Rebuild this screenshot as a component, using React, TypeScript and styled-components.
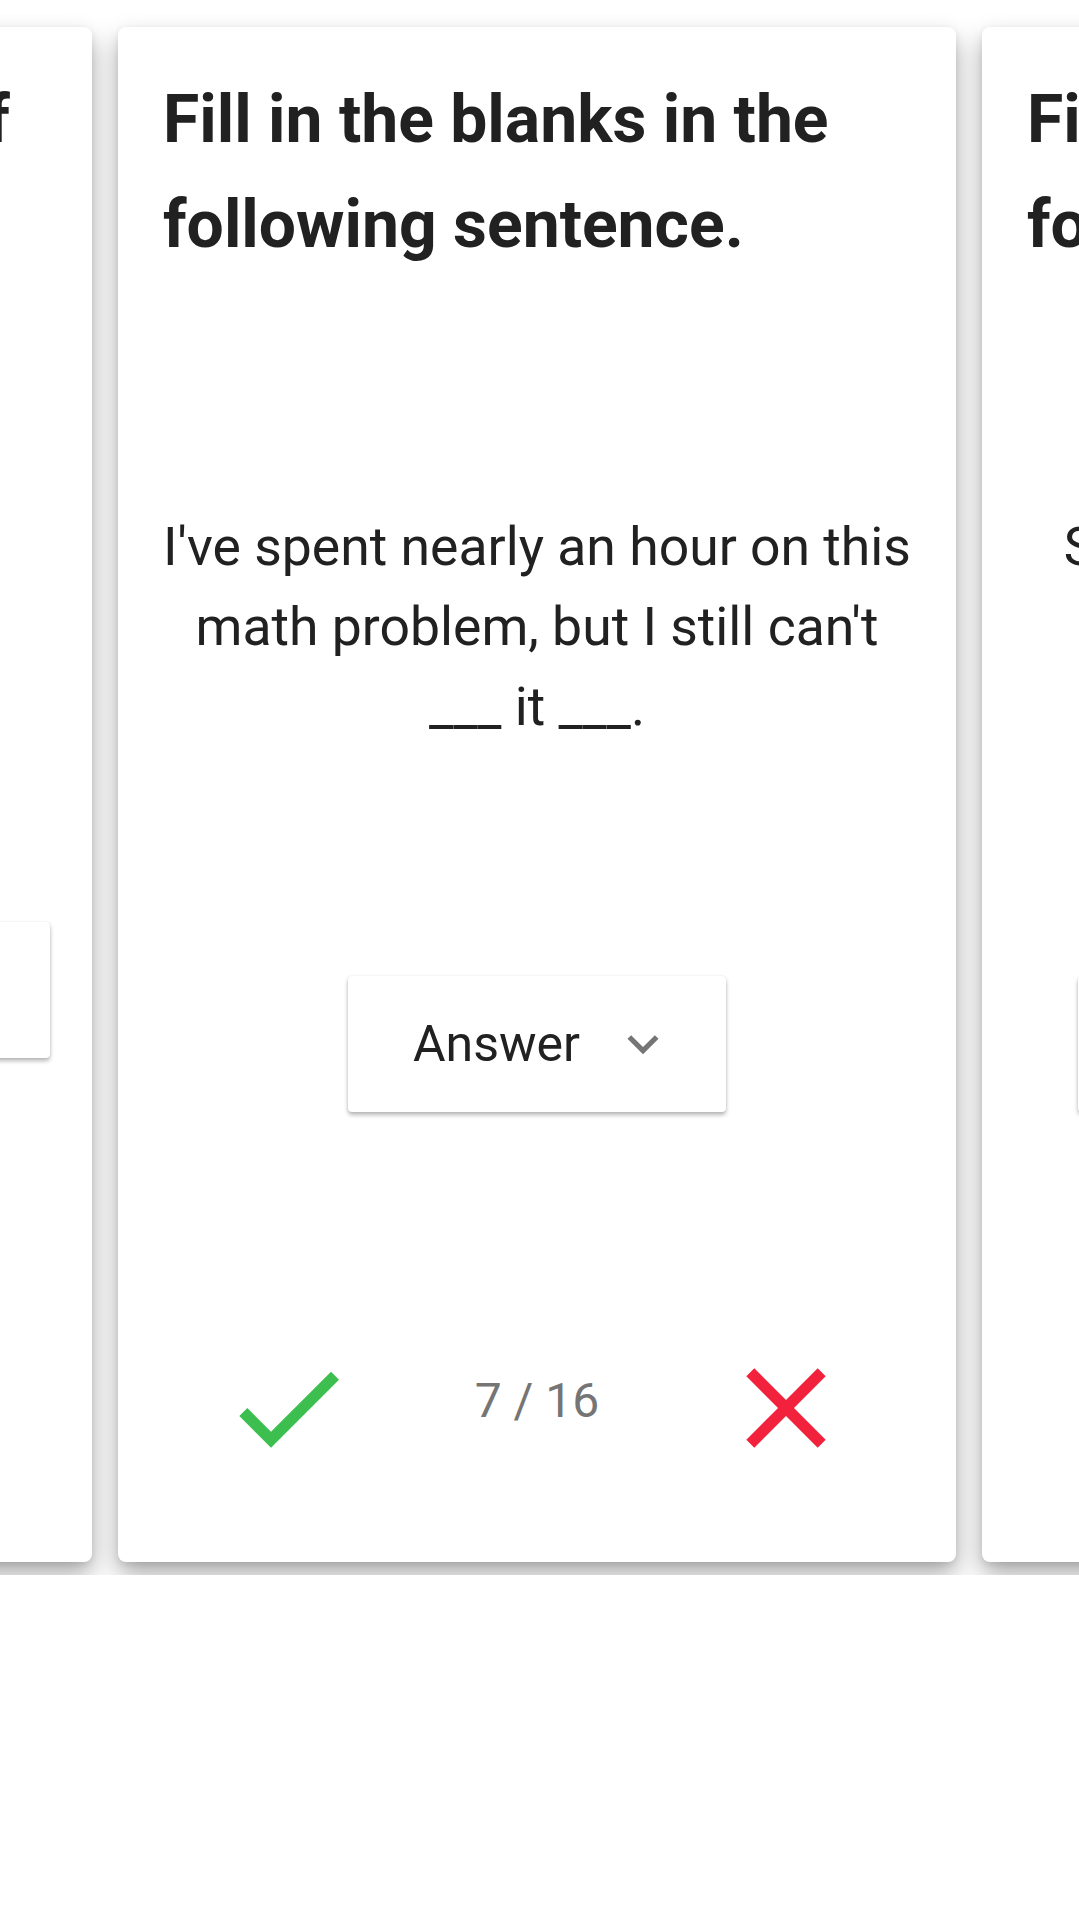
import React from "react";
import styled, { createGlobalStyle } from "styled-components";

const GlobalStyle = createGlobalStyle`
  html, body {
    margin: 0;
    padding: 0;
    background: #ffffff;
  }
  body {
    font-family: Roboto, "Noto Sans", "Liberation Sans", sans-serif;
    color: #212121;
  }
`;

const Page = styled.main`
  padding-top: 13px;
`;

const Carousel = styled.div`
  height: 1562px;
  box-sizing: border-box;
  padding: 14px 0 13px;
  overflow: hidden;
  background: #ffffff;
`;

const Track = styled.div`
  display: flex;
  gap: 26px;
  height: 100%;
  margin-left: -746px;
`;

const Card = styled.section`
  flex: 0 0 838px;
  min-width: 0;
  box-sizing: border-box;
  display: flex;
  flex-direction: column;
  padding: 40px 45px 86px;
  background: #ffffff;
  border-radius: 8px;
  box-shadow: 0 12px 24px rgba(0, 0, 0, 0.34), 0 2px 6px rgba(0, 0, 0, 0.08);
`;

const Title = styled.h2`
  margin: 0;
  font-size: 66px;
  font-weight: 700;
  line-height: 105px;
  color: #212121;
`;

const Middle = styled.div`
  flex: 1;
  display: flex;
  flex-direction: column;
  align-items: center;
  justify-content: space-evenly;
`;

const Sentence = styled.p`
  margin: 0;
  padding-top: 2px;
  font-size: 53.5px;
  line-height: 80px;
  text-align: center;
  color: #212121;
`;

const SelectButton = styled.button<{ $minWidth?: number }>`
  display: flex;
  align-items: center;
  justify-content: space-between;
  flex-shrink: 0;
  box-sizing: border-box;
  height: 136px;
  min-width: ${(p) => (p.$minWidth ? `${p.$minWidth}px` : "auto")};
  padding: 0 52px 0 65px;
  border: none;
  border-radius: 4px;
  background: #ffffff;
  font-family: inherit;
  font-size: 50px;
  color: #212121;
  white-space: nowrap;
  box-shadow: 0 3px 4px rgba(0, 0, 0, 0.28), 0 0 2px rgba(0, 0, 0, 0.1);
  cursor: pointer;
`;

const Chevron = styled.svg`
  width: 62px;
  height: 62px;
  margin-left: 32px;
  fill: #757575;
  flex-shrink: 0;
`;

const Footer = styled.div`
  display: grid;
  grid-template-columns: repeat(3, 1fr);
  align-items: center;
  justify-items: center;
  height: 136px;
`;

const IconButton = styled.button<{ $color: string }>`
  display: flex;
  padding: 0;
  border: none;
  background: none;
  cursor: pointer;
  svg {
    width: 136px;
    height: 136px;
    fill: ${(p) => p.$color};
  }
`;

const Counter = styled.span`
  font-size: 48px;
  color: #757575;
  padding-bottom: 16px;
`;

type CardData = {
  title: string;
  sentence: string;
  answer: string;
  minWidth?: number;
  index: number;
};

const cards: CardData[] = [
  {
    title: "Choose the definition of the idiom.",
    sentence: "\u201Ca piece of cake\u201D",
    answer: "something very easy",
    minWidth: 754,
    index: 6,
  },
  {
    title: "Fill in the blanks in the following sentence.",
    sentence:
      "I've spent nearly an hour on this math problem, but I still can't ___ it ___.",
    answer: "Answer",
    index: 7,
  },
  {
    title: "Fill in the blanks in the following sentence.",
    sentence:
      "Stress is bad for your health, and you must ___ it ___ effectively.",
    answer: "Answer",
    minWidth: 646,
    index: 8,
  },
];

const CheckIcon = () => (
  <svg viewBox="0 0 24 24" aria-hidden="true">
    <path d="M9 16.17 4.83 12l-1.42 1.41L9 19 21 7l-1.41-1.41z" />
  </svg>
);

const CloseIcon = () => (
  <svg viewBox="0 0 24 24" aria-hidden="true">
    <path d="M19 6.41 17.59 5 12 10.59 6.41 5 5 6.41 10.59 12 5 17.59 6.41 19 12 13.41 17.59 19 19 17.59 13.41 12z" />
  </svg>
);

function QuizCard({ data }: { data: CardData }) {
  return (
    <Card>
      <Title>{data.title}</Title>
      <Middle>
        <Sentence>{data.sentence}</Sentence>
        <SelectButton $minWidth={data.minWidth}>
          <span>{data.answer}</span>
          <Chevron viewBox="0 0 24 24" aria-hidden="true">
            <path d="M16.59 8.59 12 13.17 7.41 8.59 6 10l6 6 6-6z" />
          </Chevron>
        </SelectButton>
      </Middle>
      <Footer>
        <IconButton $color="#3dbf50" aria-label="Correct">
          <CheckIcon />
        </IconButton>
        <Counter>
          {data.index} / 16
        </Counter>
        <IconButton $color="#f2223d" aria-label="Wrong">
          <CloseIcon />
        </IconButton>
      </Footer>
    </Card>
  );
}

export default function App() {
  return (
    <>
      <GlobalStyle />
      <Page>
        <Carousel>
          <Track>
            {cards.map((c) => (
              <QuizCard key={c.index} data={c} />
            ))}
          </Track>
        </Carousel>
      </Page>
    </>
  );
}
